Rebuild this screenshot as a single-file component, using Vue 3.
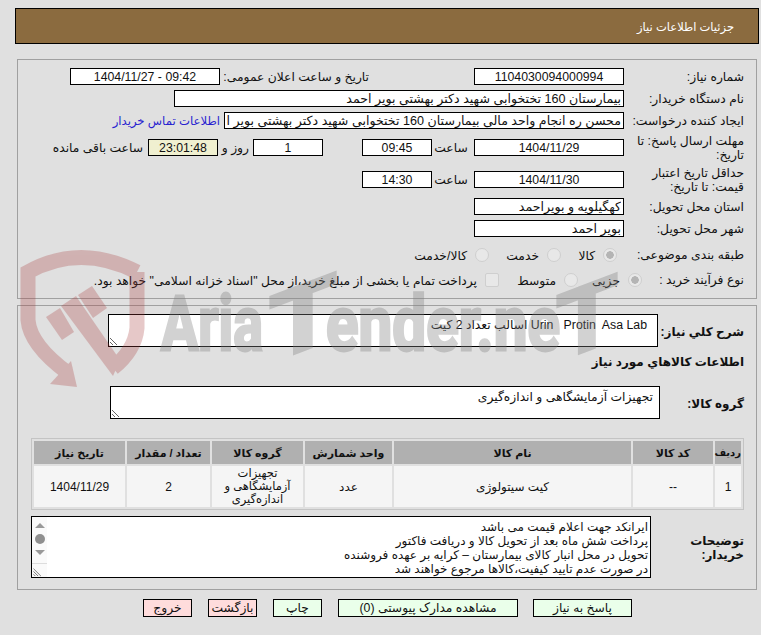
<template>
  <div class="page" dir="rtl">
    <div class="title-bar"><span>جزئیات اطلاعات نیاز</span></div>

    <section class="panel first">
      <div class="row">
        <label class="lbl">شماره نیاز:</label>
        <input class="box w150 center" readonly value="1104030094000994" />
        <label class="lbl-public">تاریخ و ساعت اعلان عمومی:</label>
        <input class="box w150 center" readonly value="09:42 - 1404/11/27" />
      </div>
      <div class="row mt5">
        <label class="lbl">نام دستگاه خریدار:</label>
        <input class="box w450 fa" readonly value="بیمارستان 160 تختخوابی شهید دکتر بهشتی بویر احمد" />
      </div>
      <div class="row mt5">
        <label class="lbl">ایجاد کننده درخواست:</label>
        <input class="box w400 fa" readonly value="محسن ره انجام واحد مالی بیمارستان 160 تختخوابی شهید دکتر بهشتی بویر احمد" />
        <a class="contact" href="#">اطلاعات تماس خریدار</a>
      </div>
      <div class="row mt10">
        <label class="lbl">مهلت ارسال پاسخ: تا تاریخ:</label>
        <input class="box w150 center" readonly value="1404/11/29" />
        <span class="hour">ساعت</span>
        <input class="box w70 center" readonly value="09:45" />
        <input class="box w70 center day" readonly value="1" />
        <span class="day-text">روز و</span>
        <input class="box w70 center timer" readonly value="23:01:48" />
        <span class="left-text">ساعت باقی مانده</span>
      </div>
      <div class="row mt15">
        <label class="lbl">حداقل تاریخ اعتبار قیمت: تا تاریخ:</label>
        <input class="box w150 center" readonly value="1404/11/30" />
        <span class="hour">ساعت</span>
        <input class="box w70 center" readonly value="14:30" />
      </div>
      <div class="row mt10">
        <label class="lbl">استان محل تحویل:</label>
        <input class="box w150 fa" readonly value="کهگیلویه و بویراحمد" />
      </div>
      <div class="row mt5">
        <label class="lbl">شهر محل تحویل:</label>
        <input class="box w150 fa" readonly value="بویر احمد" />
      </div>
      <div class="row mt9">
        <label class="lbl">طبقه بندی موضوعی:</label>
        <div class="opt o-kala"><input type="radio" name="cat" checked disabled /><span>کالا</span></div>
        <div class="opt o-khed"><input type="radio" name="cat" disabled /><span>خدمت</span></div>
        <div class="opt"><input type="radio" name="cat" disabled /><span>کالا/خدمت</span></div>
      </div>
      <div class="row mt8">
        <label class="lbl short">نوع فرآیند خرید :</label>
        <div class="opt o-jozi"><input type="radio" name="kind" checked disabled /><span>جزیی</span></div>
        <div class="opt o-mot"><input type="radio" name="kind" disabled /><span>متوسط</span></div>
        <div class="opt"><input type="checkbox" disabled /><span>پرداخت تمام یا بخشی از مبلغ خرید،از محل "اسناد خزانه اسلامی" خواهد بود.</span></div>
      </div>
    </section>

    <section class="panel second">
      <div class="row area-row">
        <label class="lbl bold w86">شرح کلي نیاز:</label>
        <textarea class="area w550" readonly>Urin   Protin  Asa Lab اسالب تعداد 2 کیت</textarea>
      </div>
      <h4 class="sub">اطلاعات کالاهاي مورد نياز</h4>
      <div class="row area-row group-row">
        <label class="lbl bold w84">گروه کالا:</label>
        <textarea class="area w550" readonly>تجهیزات آزمایشگاهی و اندازه‌گیری</textarea>
      </div>

      <table class="items">
        <colgroup>
          <col v-for="w in colWidths" :key="w.key" :style="{ width: w.size + 'px' }" />
        </colgroup>
        <thead>
          <tr>
            <th v-for="h in headers" :key="h">{{ h }}</th>
          </tr>
        </thead>
        <tbody>
          <tr>
            <td>1</td>
            <td>--</td>
            <td>کیت سیتولوژی</td>
            <td>عدد</td>
            <td class="group-cell">تجهیزات آزمایشگاهی و اندازه‌گیری</td>
            <td>2</td>
            <td>1404/11/29</td>
          </tr>
        </tbody>
      </table>

      <div class="notes-row">
        <label class="lbl bold w93">توضیحات خریدار:</label>
        <div class="notes">
          <div class="notes-text">
            <div v-for="line in notes" :key="line">{{ line }}</div>
          </div>
          <div class="fake-scroll">
            <i class="up"></i>
            <i class="dot"></i>
            <i class="down"></i>
            <svg class="grip" width="15" height="14" viewBox="0 0 15 14">
              <path d="M1 5 L9 13 M1 8 L6 13 M1 11 L3 13" stroke="#777" stroke-width="1" fill="none" />
            </svg>
          </div>
        </div>
      </div>
    </section>

    <div class="actions">
      <button class="btn green b-reply">پاسخ به نیاز</button>
      <button class="btn green b-docs">مشاهده مدارک پیوستی (0)</button>
      <button class="btn green b-small">چاپ</button>
      <button class="btn red b-small">بازگشت</button>
      <button class="btn red b-small">خروج</button>
    </div>

    <!-- watermark lies over the whole form -->
    <svg class="watermark" width="761" height="635" viewBox="0 0 761 635">
      <g fill="#a83c3c" opacity="0.28">
        <path d="M137 272 Q80 243 28 272 L28 320 Q30 345 68 373 M137 272 L137 328 Q135 350 113 368" fill="none" stroke="#a83c3c" stroke-width="15" />
        <polygon points="71,361 77,387 50,384" />
        <polygon points="46,317 60,308 74,332 62,340" />
        <polygon points="61,306 76,296 120,360 113,376" />
        <polygon points="78,295 92,286 107,308 93,318" />
      </g>
      <g class="wm-text" fill="#808080" stroke="#808080" stroke-width="3" opacity="0.36">
        <text x="161" y="350" font-size="76" textLength="102" lengthAdjust="spacingAndGlyphs">Aria</text>
        <text transform="matrix(1 -0.38 0 1 269 363)" font-size="92" textLength="68" lengthAdjust="spacingAndGlyphs">T</text>
        <text x="326" y="350" font-size="76" textLength="234" lengthAdjust="spacingAndGlyphs">ender.ne</text>
        <text transform="matrix(1 -0.38 0 1 556 362)" font-size="92" textLength="62" lengthAdjust="spacingAndGlyphs">T</text>
      </g>
    </svg>
  </div>
</template>

<script setup>
const headers = ['ردیف', 'کد کالا', 'نام کالا', 'واحد شمارش', 'گروه کالا', 'تعداد / مقدار', 'تاریخ نیاز']

const colWidths = [
  { key: 'a', size: 26 },
  { key: 'b', size: 80 },
  { key: 'c', size: 237 },
  { key: 'd', size: 87 },
  { key: 'e', size: 91 },
  { key: 'f', size: 83 },
  { key: 'g', size: 91 }
]

const notes = [
  'ایرانکد جهت اعلام قیمت می باشد',
  'پرداخت شش ماه بعد از تحویل کالا و دریافت فاکتور',
  'تحویل در محل انبار کالای بیمارستان – کرایه بر عهده فروشنده',
  'در صورت عدم تایید کیفیت،کالاها مرجوع خواهند شد'
]
</script>

<style>
html,
body {
  margin: 0;
  background: #e0e0e0;
}
</style>

<style scoped>
.page {
  position: relative;
  width: 761px;
  height: 635px;
  overflow: hidden;
  box-sizing: border-box;
  padding-top: 8px;
  background: #e0e0e0;
  color: #111;
  font-family: "Liberation Sans", "DejaVu Sans", sans-serif;
  font-size: 12.3px;
  line-height: 14px;
}

.title-bar {
  box-sizing: border-box;
  width: 744px;
  height: 36px;
  margin-right: 2px;
  padding-right: 24px;
  background: #8b6b3f;
  border: 1px solid #000;
  color: #fff;
  font-size: 11.5px;
  line-height: 36px;
}

.panel {
  box-sizing: border-box;
  width: 740px;
  margin-right: 4px;
  border: 1px solid #a0a0a0;
  padding-right: 12px;
}

.first {
  height: 240px;
  margin-top: 15px;
  padding-top: 8px;
}

.second {
  height: 285px;
  margin-top: 6px;
  padding-top: 8px;
}

.row {
  display: flex;
  align-items: center;
  height: 17px;
}

.mt5 { margin-top: 5px; }
.mt8 { margin-top: 8px; }
.mt9 { margin-top: 9px; }
.mt10 { margin-top: 10px; }
.mt15 { margin-top: 15px; }

.lbl {
  flex: none;
  width: 120px;
  padding-top: 1px;
}

.lbl.short { width: 102px; }
.lbl.bold { font-weight: 700; font-size: 12px; white-space: nowrap; }
.lbl.w86 { width: 86px; padding-top: 3px; }
.lbl.w84 { width: 84px; padding-top: 3px; }
.lbl.w93 { width: 93px; white-space: normal; }

.lbl-public {
  flex: none;
  width: 145px;
  margin-right: 105px;
  margin-left: 4px;
  white-space: nowrap;
}

.box {
  flex: none;
  box-sizing: border-box;
  height: 17px;
  padding: 0 2px;
  border: 1px solid #000;
  background: #fff;
  color: #111;
  font: inherit;
  outline: none;
}

.box.fa { font-size: 12.6px; }
.center { text-align: center; }
.w150 { width: 150px; }
.w450 { width: 450px; }
.w400 { width: 400px; }
.w70 { width: 70px; }

.contact {
  margin-right: 4px;
  color: #2a1fd0;
  font-size: 11.7px;
  text-decoration: none;
  white-space: nowrap;
}

.hour {
  flex: none;
  width: 38px;
  margin: 0 4px 0 0;
  text-align: center;
}

.day { margin-right: 39px; }

.day-text {
  flex: none;
  width: 35px;
  padding-right: 4px;
  box-sizing: border-box;
}

.timer { background: #f0f0d0; }

.left-text {
  margin-right: 5px;
  white-space: nowrap;
}

.opt {
  flex: none;
  display: flex;
  align-items: center;
  gap: 8px;
  white-space: nowrap;
}

.opt span { padding-top: 2px; }

.opt input {
  flex: none;
  appearance: none;
  box-sizing: border-box;
  width: 14px;
  height: 14px;
  margin: 0;
  border: 1px solid #cfcfcf;
  background: #e8e8e8;
}

.opt input[type="radio"] { border-radius: 50%; }
.opt input[type="checkbox"] { border-radius: 2px; }
.opt input:checked { background: radial-gradient(circle, #b4b4b4 0 3.5px, #e8e8e8 4px); }

.o-kala { width: 56px; padding-right: 7px; }
.o-khed { width: 72px; }
.o-jozi { width: 64px; }
.o-mot { width: 79px; }

.area-row {
  height: 33px;
}

.area {
  flex: none;
  box-sizing: border-box;
  height: 33px;
  padding: 3px 10px 0;
  border: 1px solid #000;
  background: #fff;
  color: #111;
  font: inherit;
  outline: none;
}

.w550 { width: 550px; }

.group-row textarea { padding-right: 6px; }

.sub {
  margin: 8px 0 0;
  height: 14px;
  font-size: 12px;
  line-height: 14px;
  font-weight: 700;
}

.group-row { margin-top: 17px; }

.items {
  width: 713px;
  margin-top: 19px;
  table-layout: fixed;
  border: 1px solid #c4c4c4;
  border-spacing: 2px;
}

.items th {
  height: 23px;
  padding: 0;
  background: #b0b0b0;
  font-size: 11px;
  font-weight: 700;
  white-space: nowrap;
}

.items th:first-child { font-size: 10px; }

.items td {
  height: 41px;
  padding: 0;
  background: #f5f5f5;
  font-size: 12px;
  text-align: center;
}

.items td.group-cell {
  padding: 0 8px;
  font-size: 11.5px;
  line-height: 13px;
}

.notes-row {
  display: flex;
  align-items: center;
  margin-top: 6px;
}

.notes {
  display: flex;
  box-sizing: border-box;
  width: 620px;
  height: 62px;
  border: 1px solid #000;
  background: #fff;
  font-size: 12px;
}

.notes-text {
  flex: 1;
  padding: 3px 2px 0 0;
}

.fake-scroll {
  position: relative;
  display: flex;
  flex-direction: column;
  align-items: center;
  width: 15px;
  padding-top: 6px;
  background: #fafafa;
}

.up,
.down {
  width: 0;
  height: 0;
  border-left: 5px solid transparent;
  border-right: 5px solid transparent;
}

.up { border-bottom: 5px solid #999; }
.down { border-top: 5px solid #999; }

.dot {
  width: 10px;
  height: 10px;
  margin: 6px 0;
  border-radius: 50%;
  background: #8f8f8f;
}

.grip {
  position: absolute;
  bottom: 0;
  left: 0;
  border-top: 1px solid #ddd;
  box-sizing: border-box;
}

.actions {
  display: flex;
  margin-top: 9px;
  padding-right: 129px;
}

.btn {
  flex: none;
  box-sizing: border-box;
  height: 18px;
  margin-left: 16px;
  padding: 0;
  border: 1px solid #000;
  color: #111;
  font: inherit;
}

.green { background: #eaffea; }
.red { background: #ffdcdc; }
.b-reply { width: 99px; margin-left: 15px; }
.b-docs { width: 180px; }
.b-small { width: 49px; }

.watermark {
  position: absolute;
  top: 0;
  left: 0;
  direction: ltr;
  pointer-events: none;
}

.wm-text {
  font-family: Roboto, "Liberation Sans", sans-serif;
  font-weight: 700;
}
</style>
